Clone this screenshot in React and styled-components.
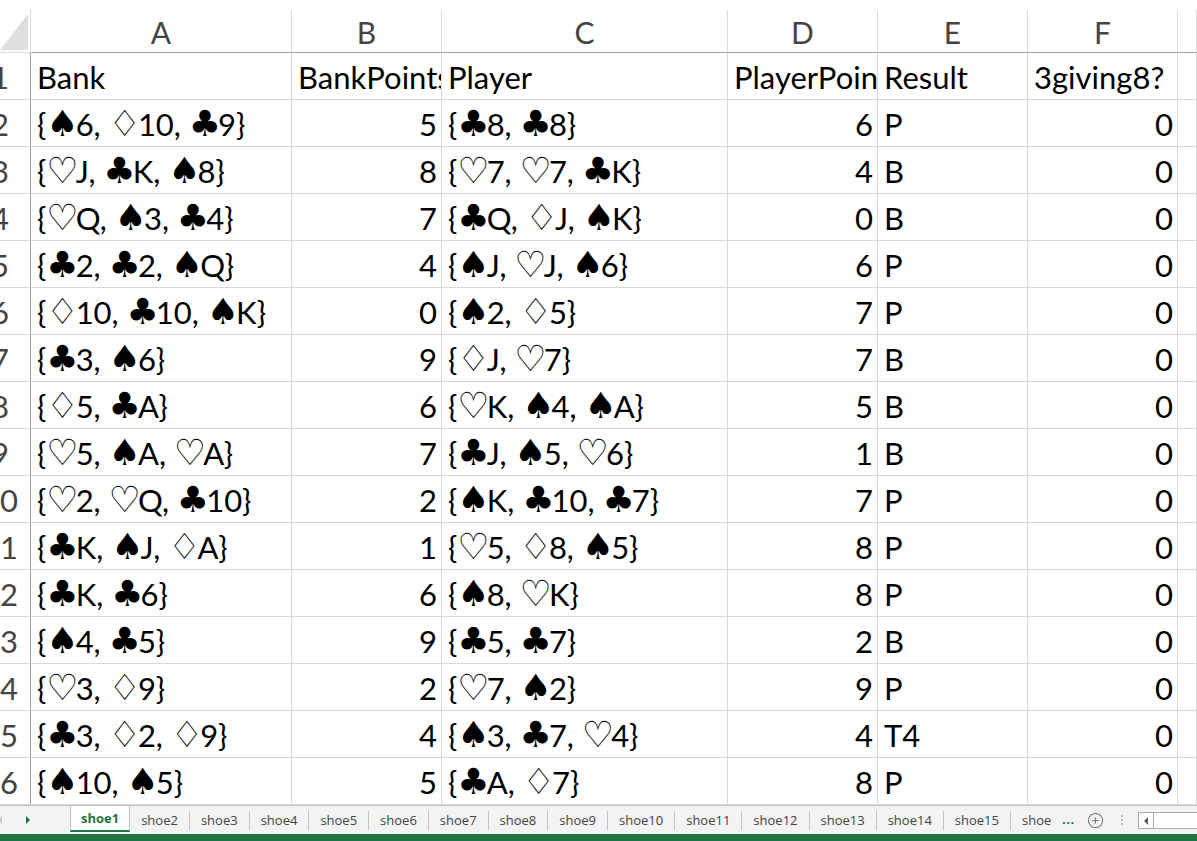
import React from 'react';
import styled, { createGlobalStyle } from 'styled-components';
import { CirclePlus } from 'lucide-react';

const GRID = '31px 261px 150px 286px 150px 150px 150px 1fr';
const EXCEL_GREEN = '#217346';

const Global = createGlobalStyle`
  html, body { margin: 0; padding: 0; background: #fff; overflow: hidden; }
  #root { width: 1197px; height: 841px; }
`;

const Window = styled.div`
  width: 1197px;
  height: 841px;
  display: flex;
  flex-direction: column;
  overflow: hidden;
  background: #fff;
  font-family: Lato, "DejaVu Sans", sans-serif;
`;

const Sheet = styled.div`
  flex: 0 0 805px;
  overflow: hidden;
`;

const HeaderRow = styled.div`
  display: grid;
  grid-template-columns: ${GRID};
  height: 53px;
  padding-top: 10px;
  box-sizing: border-box;
`;

const Corner = styled.div`
  display: flex;
  align-items: flex-end;
  padding-bottom: 2px;
  border-right: 1px solid #dcdcdc;
  border-bottom: 1px solid #dcdcdc;
`;

const HeadCell = styled.div`
  display: flex;
  align-items: flex-end;
  justify-content: center;
  padding-bottom: 5px;
  border-right: 1px solid #dcdcdc;
  border-bottom: 1px solid #a2a2a2;
  font-size: 30px;
  line-height: 30px;
  color: #444;
`;

const Row = styled.div`
  display: grid;
  grid-template-columns: ${GRID};
  height: 47px;
`;

const RowNum = styled.div`
  display: flex;
  justify-content: flex-end;
  align-items: flex-end;
  padding-bottom: 6px;
  overflow: hidden;
  border-right: 1px solid #a2a2a2;
  border-bottom: 1px solid #d8d8d8;
  font-size: 31px;
  line-height: 31px;
  color: #444;
`;

const RowNumText = styled.span`
  flex: 0 0 60px;
  text-align: center;
`;

const Cell = styled.div`
  display: flex;
  align-items: flex-end;
  justify-content: ${(p) => (p.$num ? 'flex-end' : 'flex-start')};
  padding: 0 4px 6px 6px;
  overflow: hidden;
  white-space: nowrap;
  border-right: 1px solid #d8d8d8;
  border-bottom: 1px solid #d8d8d8;
  font-size: 31px;
  line-height: 31px;
  color: #000;
`;

const CellText = styled.span`
  line-height: 31px;
`;

/* card suit glyphs are drawn a little larger than the text around them */
const Suit = styled.span`
  font-family: "DejaVu Sans", sans-serif;
  font-size: 36px;
  line-height: 0;
  letter-spacing: -3px;
`;

const TabBar = styled.div`
  flex: 0 0 29px;
  box-sizing: border-box;
  display: flex;
  align-items: stretch;
  background: #f3f3f3;
  border-top: 1px solid #c4c4c4;
  font-family: "Open Sans", sans-serif;
  font-size: 13px;
  color: #444;
`;

const NavArea = styled.div`
  flex: 0 0 70px;
  display: flex;
  align-items: center;
`;

const NavArrow = styled.span`
  width: 0;
  height: 0;
  border-top: 4px solid transparent;
  border-bottom: 4px solid transparent;
  border-left: 4px solid ${(p) => p.$color};
  margin-left: ${(p) => p.$offset}px;
`;

const NavBack = styled.span`
  width: 0;
  height: 0;
  border-top: 4px solid transparent;
  border-bottom: 4px solid transparent;
  border-right: 4px solid #c8c8c8;
  margin-left: -2px;
`;

const TabStrip = styled.div`
  flex: 0 0 982px;
  display: flex;
  align-items: stretch;
  overflow: hidden;
`;

const Tab = styled.div`
  flex: 0 0 auto;
  display: flex;
  align-items: center;
  padding: 0 11px 1px;
  white-space: nowrap;
  ${(p) =>
    p.$active
      ? `
    background: #fff;
    color: ${EXCEL_GREEN};
    font-weight: 700;
    border-left: 1px solid #c4c4c4;
    border-right: 1px solid #c4c4c4;
    border-bottom: 2px solid ${EXCEL_GREEN};
    margin-bottom: 2px;
    padding: 0 10px 0;
  `
      : ''}
`;

const TabDivider = styled.span`
  flex: 0 0 1px;
  align-self: center;
  height: 19px;
  background: #c4c4c4;
`;

const More = styled.div`
  flex: 0 0 28px;
  box-sizing: border-box;
  padding: 0 0 2px 10px;
  display: flex;
  align-items: center;
  color: ${EXCEL_GREEN};
  font-weight: 700;
  letter-spacing: 0.5px;
`;

const AddSheet = styled.div`
  flex: 0 0 30px;
  display: flex;
  align-items: center;
  justify-content: center;
  color: #777;
`;

const Grip = styled.div`
  flex: 0 0 24px;
  display: flex;
  flex-direction: column;
  align-items: center;
  justify-content: center;
  gap: 2px;
`;

const GripDot = styled.span`
  width: 2px;
  height: 2px;
  background: #bdbdbd;
`;

const HScroll = styled.div`
  flex: 1 0 auto;
  margin: 6px -10px 5px 4px;
  display: flex;
  border: 1px solid #ababab;
  background: #fff;
`;

const ScrollButton = styled.div`
  flex: 0 0 14px;
  display: flex;
  align-items: center;
  justify-content: center;
  border-right: 1px solid #ababab;
`;

const ScrollArrow = styled.span`
  width: 0;
  height: 0;
  border-top: 4px solid transparent;
  border-bottom: 4px solid transparent;
  border-right: 4px solid #606060;
`;

const StatusStrip = styled.div`
  flex: 0 0 7px;
  background: ${EXCEL_GREEN};
`;

const COLUMNS = ['A', 'B', 'C', 'D', 'E', 'F', ''];

const ROWS = [
  ['Bank', 'BankPoints', 'Player', 'PlayerPoints', 'Result', '3giving8?'],
  ['{♠6, ♢10, ♣9}', 5, '{♣8, ♣8}', 6, 'P', 0],
  ['{♡J, ♣K, ♠8}', 8, '{♡7, ♡7, ♣K}', 4, 'B', 0],
  ['{♡Q, ♠3, ♣4}', 7, '{♣Q, ♢J, ♠K}', 0, 'B', 0],
  ['{♣2, ♣2, ♠Q}', 4, '{♠J, ♡J, ♠6}', 6, 'P', 0],
  ['{♢10, ♣10, ♠K}', 0, '{♠2, ♢5}', 7, 'P', 0],
  ['{♣3, ♠6}', 9, '{♢J, ♡7}', 7, 'B', 0],
  ['{♢5, ♣A}', 6, '{♡K, ♠4, ♠A}', 5, 'B', 0],
  ['{♡5, ♠A, ♡A}', 7, '{♣J, ♠5, ♡6}', 1, 'B', 0],
  ['{♡2, ♡Q, ♣10}', 2, '{♠K, ♣10, ♣7}', 7, 'P', 0],
  ['{♣K, ♠J, ♢A}', 1, '{♡5, ♢8, ♠5}', 8, 'P', 0],
  ['{♣K, ♣6}', 6, '{♠8, ♡K}', 8, 'P', 0],
  ['{♠4, ♣5}', 9, '{♣5, ♣7}', 2, 'B', 0],
  ['{♡3, ♢9}', 2, '{♡7, ♠2}', 9, 'P', 0],
  ['{♣3, ♢2, ♢9}', 4, '{♠3, ♣7, ♡4}', 4, 'T4', 0],
  ['{♠10, ♠5}', 5, '{♣A, ♢7}', 8, 'P', 0],
];

const SHEETS = Array.from({ length: 16 }, (_, i) => `shoe${i + 1}`);
const ACTIVE_SHEET = 0;

const SUITS = new Set(['♠', '♣', '♡', '♢']);

function CardText({ value }) {
  if (typeof value !== 'string') return value;
  return Array.from(value).map((ch, i) =>
    SUITS.has(ch) ? <Suit key={i}>{ch}</Suit> : <React.Fragment key={i}>{ch}</React.Fragment>
  );
}

function CornerMark() {
  return (
    <svg width="28" height="36" viewBox="0 0 28 36">
      <polygon points="28,0 28,36 0,36" fill="#dfdfdf" />
    </svg>
  );
}

function SheetTabs() {
  const items = [];
  SHEETS.forEach((name, i) => {
    if (i > 0 && i !== ACTIVE_SHEET && i - 1 !== ACTIVE_SHEET) {
      items.push(<TabDivider key={`d${i}`} />);
    }
    items.push(
      <Tab key={name} $active={i === ACTIVE_SHEET}>
        {name}
      </Tab>
    );
  });
  return <TabStrip>{items}</TabStrip>;
}

export default function App() {
  return (
    <>
      <Global />
      <Window>
        <Sheet>
          <HeaderRow>
            <Corner>
              <CornerMark />
            </Corner>
            {COLUMNS.map((c, i) => (
              <HeadCell key={i}>{c}</HeadCell>
            ))}
          </HeaderRow>
          {ROWS.map((row, r) => (
            <Row key={r}>
              <RowNum>
                <RowNumText>{r + 1}</RowNumText>
              </RowNum>
              {row.map((v, c) => (
                <Cell key={c} $num={typeof v === 'number'}>
                  <CellText>
                    <CardText value={v} />
                  </CellText>
                </Cell>
              ))}
              <Cell />
            </Row>
          ))}
        </Sheet>
        <TabBar>
          <NavArea>
            <NavBack />
            <NavArrow $color={EXCEL_GREEN} $offset={24} />
          </NavArea>
          <SheetTabs />
          <More>...</More>
          <AddSheet>
            <CirclePlus size={17} strokeWidth={1.5} />
          </AddSheet>
          <Grip>
            <GripDot />
            <GripDot />
            <GripDot />
          </Grip>
          <HScroll>
            <ScrollButton>
              <ScrollArrow />
            </ScrollButton>
          </HScroll>
        </TabBar>
        <StatusStrip />
      </Window>
    </>
  );
}
